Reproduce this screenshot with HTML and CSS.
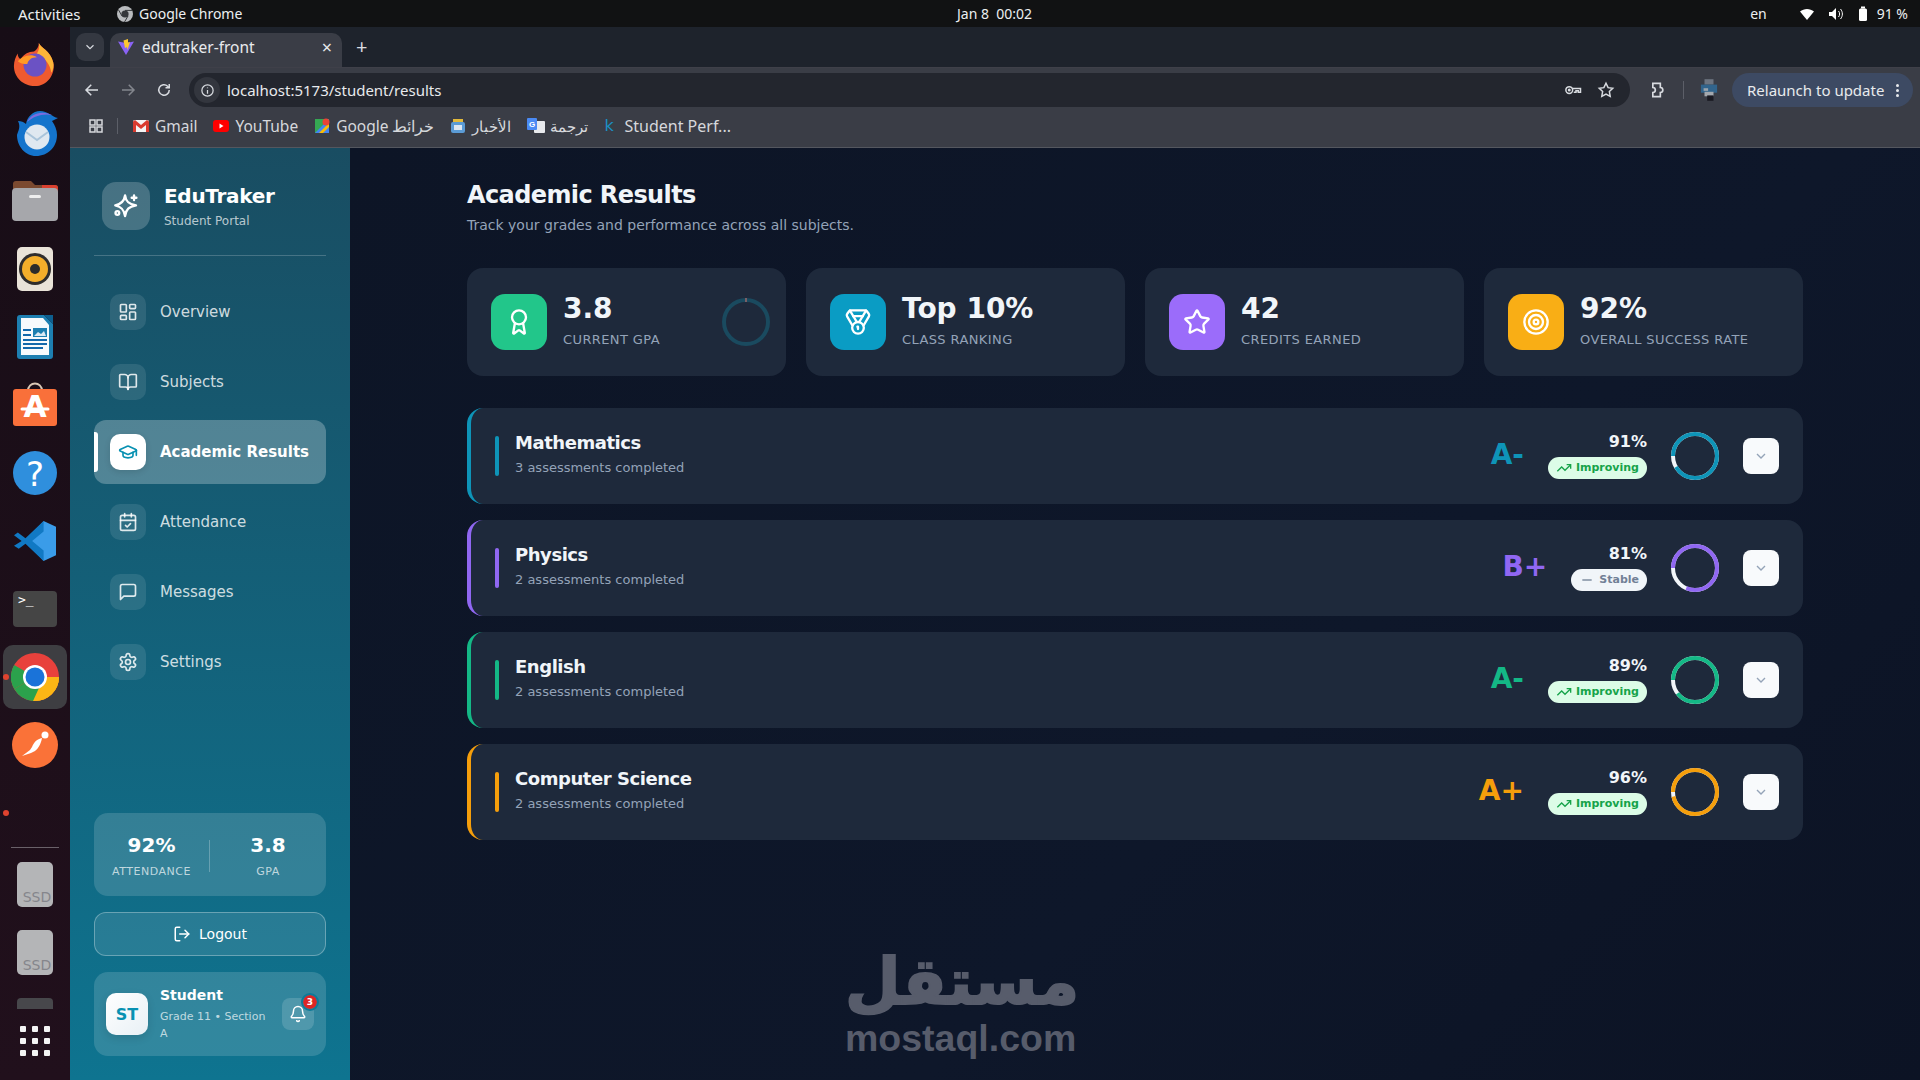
FILE: index.html
```html
<!DOCTYPE html>
<html lang="en">
<head>
    <meta charset="UTF-8">
    <title>edutraker-front</title>
    <link rel="stylesheet" href="styles.css">
</head>
<body>
    <!-- Icon sprite -->
    <svg class="sprite" xmlns="http://www.w3.org/2000/svg">
        <symbol id="i-trend" viewBox="0 0 24 24"><path d="m22 7-8.5 8.5-5-5L2 17"/><path d="M16 7h6v6"/></symbol>
        <symbol id="i-minus" viewBox="0 0 24 24"><path d="M5 12h14"/></symbol>
        <symbol id="i-chevron" viewBox="0 0 24 24"><path d="m6 9 6 6 6-6"/></symbol>
    </svg>

    <!-- Top bar -->
    <div class="topbar">
        <div class="top-left">
            <span class="activities">Activities</span>
            <svg class="top-chrome" viewBox="0 0 16 16"><circle cx="8" cy="8" r="8" fill="#b9bbbe"/><circle cx="8" cy="8" r="3.6" fill="#35373b"/><path d="M8 4.4h7M5 10 1.6 4M11 10l-3.500 6" stroke="#35373b" stroke-width="1"/></svg>
            <span>Google Chrome</span>
        </div>
        <span class="clock">Jan 8&nbsp;&nbsp;00:02</span>
        <div class="top-right">
            <span class="lang">en</span>
            <svg class="tray tray-wifi" viewBox="0 0 16 16"><path d="M1 5.500C5 2 11 2 15 5.500L8 14z" fill="#fff"/></svg>
            <svg class="tray tray-sound" viewBox="0 0 16 16"><path d="M1 6h3l4-4v12l-4-4H1z" fill="#fff"/><path d="M10.500 5c1.500 1.800 1.500 4.200 0 6M12.500 3c2.500 3 2.500 7 0 10" fill="none" stroke="#fff"/></svg>
            <svg class="tray tray-battery" viewBox="0 0 16 16"><rect x="6" y="0.500" width="4" height="2" fill="#fff"/><rect x="4" y="2.500" width="8" height="12.500" rx="1.500" fill="#fff"/></svg>
            <span>91 %</span>
        </div>
    </div>

    <div class="desktop">
        <!-- Dock -->
        <div class="dock">
            <div class="dock-item">
                <svg viewBox="0 0 48 48" width="46" height="46"><path d="M28 1c2 5 12 8 15 20 3 13-7 25-19 25C12 46 2 37 2 25c0-5 2-10 4-13 0 3 1 5 3 6 3-5 8-8 14-8 3-2 5-5 5-9z" fill="#ef5a2f"/><path d="M28 1c2 5 12 8 15 20 1 4 0 8-2 11-1-8-6-15-15-20 2-3 3-7 2-11z" fill="#fdb638"/><circle cx="24" cy="24" r="12" fill="#6b52c4"/><path d="M6 20c6-6 14-8 20-4-6 0-9 3-10 7-4 0-8-1-10-3z" fill="#ff9a26"/></svg>
            </div>
            <div class="dock-item">
                <svg viewBox="0 0 48 48" width="48" height="48"><path d="M7 12c3 6 0 10-1 14 0 11 8 21 19 21 12 0 21-9 21-21 0-5-2-10-5-14l6-3c-6-1-10-7-18-7C22 2 16 8 15 15 13 13 10 12 7 12z" fill="#1474cc"/><path d="M16 13C20 5 30 1 41 6c-9-2-18 1-25 7z" fill="#7b6be0"/><circle cx="26" cy="28" r="12.500" fill="#dfe8f0"/><path d="m15 23 11 8 11-8" fill="none" stroke="#a9c4da" stroke-width="2"/></svg>
            </div>
            <div class="dock-item">
                <svg viewBox="0 0 46 42" width="46" height="42"><path d="M1 4a3 3 0 0 1 3-3h15l4 4h20a3 3 0 0 1 3 3v8H1z" fill="#7b4a30"/><path d="M30 5h13a3 3 0 0 1 3 3v6H30z" fill="#d9402f"/><rect y="8" width="46" height="33" rx="4" fill="#a6a7ab"/><rect x="17" y="15" width="12" height="3" rx="1.500" fill="#eee"/></svg>
            </div>
            <div class="dock-item">
                <svg viewBox="0 0 36 44" width="36" height="44"><rect width="36" height="44" rx="5" fill="#e9e3d8"/><circle cx="18" cy="22" r="16" fill="#2f2d2c"/><circle cx="18" cy="22" r="13" fill="#f4ae2a"/><circle cx="18" cy="22" r="5" fill="#2b2b2b"/></svg>
            </div>
            <div class="dock-item">
                <svg viewBox="0 0 36 44" width="36" height="44"><path d="M3 0h24l9 9v32a3 3 0 0 1-3 3H3a3 3 0 0 1-3-3V3a3 3 0 0 1 3-3z" fill="#1d7fb1"/><path d="M4 3h22l6 7v30H4z" fill="#f7fafc"/><path d="M27 0h9v9z" fill="#0d5f8f"/><path d="M6 15h8M6 20h8M6 25h24M6 29h24M6 33h20" stroke="#1268ab" stroke-width="2"/><rect x="16" y="13" width="14" height="9" fill="#1d7fb1"/><path d="m17 21 4-4 3 2 3-3 2 5z" fill="#dbe9f3"/></svg>
            </div>
            <div class="dock-item dock-shop">
                <svg viewBox="0 0 44 44" width="44" height="44"><path d="M15 9c0-10 14-10 14 0" fill="none" stroke="#d9c7b6" stroke-width="2"/><path d="M3 7h38a3 3 0 0 1 3 3v31a3 3 0 0 1-3 3H3a3 3 0 0 1-3-3V10a3 3 0 0 1 3-3z" fill="#f9703a"/><text class="dock-letter" x="22" y="35" text-anchor="middle" font-size="30">A</text><path d="M9 27h26" stroke="#fff" stroke-width="3" stroke-linecap="round"/></svg>
            </div>
            <div class="dock-item">
                <svg viewBox="0 0 44 44" width="44" height="44"><circle cx="22" cy="22" r="22" fill="#2f8fdd"/><text class="dock-help" x="22" y="35" text-anchor="middle" font-size="34">?</text></svg>
            </div>
            <div class="dock-item">
                <svg viewBox="0 0 44 42" width="42" height="42"><path d="M31 0 44 6v30l-13 6L12 21z" fill="#3a9ce9"/><path d="M31 0v11L19 21l12 10v11L12 24 5 29 0 26l8-5-8-6 4-3 8 6z" fill="#1179c4"/></svg>
            </div>
            <div class="dock-item">
                <svg viewBox="0 0 44 36" width="44" height="36"><rect width="44" height="36" rx="4" fill="#454545"/><text class="dock-term" x="5" y="13" font-size="13">&gt;_</text></svg>
            </div>
            <div class="dock-item dock-active">
                <i class="run-dot"></i>
                <svg viewBox="0 0 48 48" width="48" height="48"><circle cx="24" cy="24" r="24" fill="#e8413c"/><path d="M24 24 3.200 36A24 24 0 0 1 3.200 12z" fill="#2ba24c"/><path d="M24 24h24a24 24 0 0 1-24 24 24 24 0 0 1-2-.1z" fill="#fbb615"/><path d="M24 24 3.200 36a24 24 0 0 0 18.800 11.900L33 24z" fill="#2ba24c"/><path d="M36 24h12a24 24 0 0 1-24 24z" fill="#fbb615"/><circle cx="24" cy="24" r="12" fill="#fff"/><circle cx="24" cy="24" r="9.500" fill="#1a73d9"/></svg>
            </div>
            <div class="dock-item">
                <svg viewBox="0 0 46 46" width="46" height="46"><circle cx="23" cy="23" r="23" fill="#fa7238"/><circle cx="33" cy="13" r="3.500" fill="#fff"/><path d="M30 16c-5 1-8 4-10 9l-2 3-8 6 9-3 4-2c3-2 6-7 7-13z" fill="#fff"/></svg>
            </div>
            <div class="dock-spacer"><i class="run-dot"></i></div>
            <div class="dock-sep"></div>
            <div class="dock-item">
                <svg viewBox="0 0 36 45" width="36" height="45"><rect width="36" height="45" rx="5" fill="#b4b5b7"/><text class="dock-ssd" x="20" y="40" text-anchor="middle" font-size="14">SSD</text></svg>
            </div>
            <div class="dock-item">
                <svg viewBox="0 0 36 45" width="36" height="45"><rect width="36" height="45" rx="5" fill="#b4b5b7"/><text class="dock-ssd" x="20" y="40" text-anchor="middle" font-size="14">SSD</text></svg>
            </div>
            <div class="dock-stub"></div>
            <div class="dock-apps">
                <i></i><i></i><i></i><i></i><i></i><i></i><i></i><i></i><i></i>
            </div>
        </div>

        <div class="window">
            <!-- Tabs -->
            <div class="tabstrip">
                <div class="tab-list"><svg viewBox="0 0 24 24" class="ui-icon small"><path d="m6 9 6 6 6-6"/></svg></div>
                <div class="tab">
                    <svg class="favicon" viewBox="0 0 16 16"><path d="M0 2.500 8 4l8-1.500L8 16z" fill="#8a63f5"/><path d="M10 0 5.500 1.500 7 9l2-1 .5 3L12 3l-2 .5z" fill="#fdc82f"/></svg>
                    <span class="tab-title">edutraker-front</span>
                    <span class="tab-close">&times;</span>
                </div>
                <span class="tab-new">+</span>
            </div>

            <!-- Toolbar -->
            <div class="toolbar">
                <svg class="ui-icon nav-btn" viewBox="0 0 24 24"><path d="M20 12H5M11 5l-7 7 7 7"/></svg>
                <svg class="ui-icon nav-btn dim" viewBox="0 0 24 24"><path d="M4 12h15M13 5l7 7-7 7"/></svg>
                <svg class="ui-icon nav-btn" viewBox="0 0 24 24"><path d="M19 12a7 7 0 1 1-2.200-5.100L19 9"/><path d="M19 4v5h-5"/></svg>
                <div class="omnibox">
                    <span class="site-info"><svg class="ui-icon tiny" viewBox="0 0 24 24"><circle cx="12" cy="12" r="9"/><path d="M12 11v6M12 7v1.500"/></svg></span>
                    <span class="url">localhost:5173/student/results</span>
                    <svg class="ui-icon omni-key" viewBox="0 0 24 24"><circle cx="7" cy="12" r="4.500"/><circle cx="7" cy="12" r="1"/><path d="M11.500 10H22v5h-3v-2h-3v2h-3"/></svg>
                    <svg class="ui-icon omni-star" viewBox="0 0 24 24"><path d="m12 3 2.800 5.900 6.200.8-4.500 4.400 1.100 6.400L12 17.400l-5.600 3.100 1.100-6.400L3 9.700l6.200-.8z"/></svg>
                </div>
                <svg class="ui-icon ext-btn" viewBox="0 0 24 24"><path d="M7 4h9v5a3 3 0 0 1 0 6v5H7v-5a3 3 0 0 0 0-6z"/></svg>
                <span class="tool-sep"></span>
                <svg class="profile" viewBox="0 0 20 24"><rect x="5" width="10" height="6" fill="#6d7480"/><rect x="1" y="6" width="18" height="9" fill="#31648c"/><rect x="4" y="10" width="5" height="3" fill="#9aa3ac"/><rect x="5" y="14" width="10" height="5" fill="#a3a8ae"/><rect x="8" y="18" width="7" height="6" fill="#1a1a22"/></svg>
                <div class="relaunch">Relaunch to update<span class="kebab"><i></i><i></i><i></i></span></div>
            </div>

            <!-- Bookmarks -->
            <div class="bookmarks">
                <svg class="bm-apps" viewBox="0 0 16 16"><path d="M2 2h5v5H2zM9 2h5v5H9zM2 9h5v5H2zM9 9h5v5H9z"/></svg>
                <span class="bm-sep"></span>
                <span class="bm"><svg class="bm-icon" viewBox="0 0 16 16"><rect y="2" width="16" height="12" rx="1.500" fill="#f4f4f4"/><path d="M0 3.500v10.500h3V7l5 4 5-4v7h3V3.500L14 2 8 7 2 2z" fill="#d93b2f"/></svg>Gmail</span>
                <span class="bm"><svg class="bm-icon" viewBox="0 0 16 16"><rect y="2" width="16" height="12" rx="3" fill="#f00"/><path d="m6.500 5.500 4 2.500-4 2.500z" fill="#fff"/></svg>YouTube</span>
                <span class="bm bm-maps"><svg class="bm-icon" viewBox="0 0 16 16"><rect x="1" y="1" width="14" height="14" fill="#35a853"/><path d="M1 15 15 1v14z" fill="#4285f4"/><path d="M5 15 15 5v4l-6 6z" fill="#fbbc05"/><circle cx="12" cy="4" r="3.500" fill="#ea4335"/></svg>Google خرائط</span>
                <span class="bm bm-news"><svg class="bm-icon" viewBox="0 0 16 16"><rect x="3" y="1" width="10" height="5" fill="#e2b93b"/><rect x="1" y="4" width="14" height="11" rx="2" fill="#5b9bd5"/><rect x="4" y="7" width="8" height="5" fill="#dce7f2"/></svg>الأخبار</span>
                <span class="bm bm-trans"><svg class="bm-icon" viewBox="0 0 18 16"><rect x="7" y="3" width="11" height="12" rx="1" fill="#e8eaed"/><rect width="10" height="12" rx="1" fill="#4a8af4"/><text class="bm-g" x="5" y="9" text-anchor="middle" font-size="8">G</text></svg>ترجمة</span>
                <span class="bm bm-student"><span class="bm-k">k</span>Student Perf...</span>
            </div>

            <!-- App -->
            <div class="app">
                <aside class="sidebar">
                    <div class="brand">
                        <div class="brand-icon">
                            <svg class="line-icon" viewBox="0 0 24 24" width="28" height="28"><path d="M11.200 3c.6 4.600 2.600 7.400 9.400 8.400-6.200 1.100-8.600 3.500-9.400 9.200-.9-5.700-3.200-8.100-8.400-9.200 5.400-1 7.700-3.800 8.400-8.400z"/><path d="M18.900 2.900v4"/><path d="M16.900 4.900h4"/><circle cx="4.600" cy="18" r="1.600"/></svg>
                        </div>
                        <div>
                            <div class="brand-name">EduTraker</div>
                            <div class="brand-sub">Student Portal</div>
                        </div>
                    </div>

                    <nav class="side-nav">
                        <a href="#" class="nav-item">
                            <span class="nav-icon"><svg class="line-icon" viewBox="0 0 24 24"><rect x="3" y="3" width="7" height="9" rx="1"/><rect x="14" y="3" width="7" height="5" rx="1"/><rect x="14" y="12" width="7" height="9" rx="1"/><rect x="3" y="16" width="7" height="5" rx="1"/></svg></span>
                            Overview
                        </a>
                        <a href="#" class="nav-item">
                            <span class="nav-icon"><svg class="line-icon" viewBox="0 0 24 24"><path d="M12 7v14"/><path d="M3 18a1 1 0 0 1-1-1V4a1 1 0 0 1 1-1h5a4 4 0 0 1 4 4 4 4 0 0 1 4-4h5a1 1 0 0 1 1 1v13a1 1 0 0 1-1 1h-6a3 3 0 0 0-3 3 3 3 0 0 0-3-3z"/></svg></span>
                            Subjects
                        </a>
                        <a href="#" class="nav-item active">
                            <span class="nav-icon"><svg class="line-icon" viewBox="0 0 24 24"><path d="M21.420 10.922a1 1 0 0 0-.019-1.838L12.830 5.180a2 2 0 0 0-1.660 0L2.600 9.080a1 1 0 0 0 0 1.832l8.570 3.908a2 2 0 0 0 1.660 0z"/><path d="M22 10v6"/><path d="M6 12.500V16a6 3 0 0 0 12 0v-3.500"/></svg></span>
                            Academic Results
                        </a>
                        <a href="#" class="nav-item">
                            <span class="nav-icon"><svg class="line-icon" viewBox="0 0 24 24"><path d="M8 2v4"/><path d="M16 2v4"/><rect x="3" y="4" width="18" height="18" rx="2"/><path d="M3 10h18"/><path d="m9 16 2 2 4-4"/></svg></span>
                            Attendance
                        </a>
                        <a href="#" class="nav-item">
                            <span class="nav-icon"><svg class="line-icon" viewBox="0 0 24 24"><path d="M21 15a2 2 0 0 1-2 2H7l-4 4V5a2 2 0 0 1 2-2h14a2 2 0 0 1 2 2z"/></svg></span>
                            Messages
                        </a>
                        <a href="#" class="nav-item">
                            <span class="nav-icon"><svg class="line-icon" viewBox="0 0 24 24"><path d="M12.220 2h-.44a2 2 0 0 0-2 2v.18a2 2 0 0 1-1 1.730l-.43.25a2 2 0 0 1-2 0l-.15-.08a2 2 0 0 0-2.730.73l-.22.38a2 2 0 0 0 .73 2.730l.15.1a2 2 0 0 1 1 1.720v.51a2 2 0 0 1-1 1.740l-.15.09a2 2 0 0 0-.73 2.730l.22.38a2 2 0 0 0 2.730.73l.15-.08a2 2 0 0 1 2 0l.43.25a2 2 0 0 1 1 1.730V20a2 2 0 0 0 2 2h.44a2 2 0 0 0 2-2v-.18a2 2 0 0 1 1-1.730l.43-.25a2 2 0 0 1 2 0l.15.08a2 2 0 0 0 2.730-.73l.22-.39a2 2 0 0 0-.73-2.730l-.15-.08a2 2 0 0 1-1-1.740v-.5a2 2 0 0 1 1-1.740l.15-.09a2 2 0 0 0 .73-2.730l-.22-.38a2 2 0 0 0-2.730-.73l-.15.08a2 2 0 0 1-2 0l-.43-.25a2 2 0 0 1-1-1.730V4a2 2 0 0 0-2-2z"/><circle cx="12" cy="12" r="3"/></svg></span>
                            Settings
                        </a>
                    </nav>

                    <div class="side-stats">
                        <div class="side-stat">
                            <div class="side-value">92%</div>
                            <div class="side-label">ATTENDANCE</div>
                        </div>
                        <div class="side-stat">
                            <div class="side-value">3.8</div>
                            <div class="side-label">GPA</div>
                        </div>
                    </div>

                    <button class="logout">
                        <svg class="line-icon" viewBox="0 0 24 24" width="18" height="18"><path d="M9 21H5a2 2 0 0 1-2-2V5a2 2 0 0 1 2-2h4"/><path d="m16 17 5-5-5-5"/><path d="M21 12H9"/></svg>
                        Logout
                    </button>

                    <div class="user-card">
                        <div class="avatar">ST</div>
                        <div class="user-info">
                            <div class="user-name">Student</div>
                            <div class="user-sub">Grade 11 • Section A</div>
                        </div>
                        <div class="bell">
                            <svg class="line-icon" viewBox="0 0 24 24" width="18" height="18"><path d="M10.268 21a2 2 0 0 0 3.464 0"/><path d="M3.262 15.326A1 1 0 0 0 4 17h16a1 1 0 0 0 .74-1.673C19.410 13.956 18 12.499 18 8A6 6 0 0 0 6 8c0 4.499-1.411 5.956-2.738 7.326"/></svg>
                            <span class="bell-count">3</span>
                        </div>
                    </div>
                </aside>

                <main class="content">
                    <h1>Academic Results</h1>
                    <p class="page-sub">Track your grades and performance across all subjects.</p>

                    <div class="stat-grid">
                        <div class="stat-card">
                            <div class="stat-icon green"><svg class="line-icon" viewBox="0 0 24 24"><path d="m15.477 12.890 1.515 8.526a.5.5 0 0 1-.81.47l-3.580-2.687a1 1 0 0 0-1.197 0l-3.586 2.686a.5.5 0 0 1-.81-.469l1.514-8.526"/><circle cx="12" cy="8" r="6"/></svg></div>
                            <div class="stat-text">
                                <div class="stat-value">3.8</div>
                                <div class="stat-label">CURRENT GPA</div>
                            </div>
                            <svg class="gpa-ring" viewBox="0 0 48 48"><circle cx="24" cy="24" r="22"/><path class="gpa-tick" d="M24 0v4"/></svg>
                        </div>
                        <div class="stat-card">
                            <div class="stat-icon cyan"><svg class="line-icon" viewBox="0 0 24 24"><path d="M7.210 15 2.660 7.140a2 2 0 0 1 .13-2.200L4.400 2.800A2 2 0 0 1 6 2h12a2 2 0 0 1 1.600.8l1.600 2.140a2 2 0 0 1 .14 2.200L16.790 15"/><path d="M11 12 5.120 2.200"/><path d="m13 12 5.880-9.800"/><path d="M8 7h8"/><circle cx="12" cy="17" r="5"/><path d="M12 18v-2h-.5"/></svg></div>
                            <div class="stat-text">
                                <div class="stat-value">Top 10%</div>
                                <div class="stat-label">CLASS RANKING</div>
                            </div>
                        </div>
                        <div class="stat-card">
                            <div class="stat-icon purple"><svg class="line-icon" viewBox="0 0 24 24"><path d="M11.525 2.295a.53.53 0 0 1 .95 0l2.310 4.679a2.123 2.123 0 0 0 1.595 1.160l5.166.756a.53.53 0 0 1 .294.904l-3.736 3.638a2.123 2.123 0 0 0-.611 1.878l.882 5.140a.53.53 0 0 1-.771.56l-4.618-2.428a2.122 2.122 0 0 0-1.973 0L6.396 21.010a.53.53 0 0 1-.77-.56l.881-5.139a2.122 2.122 0 0 0-.611-1.879L2.160 9.795a.53.53 0 0 1 .294-.906l5.165-.755a2.122 2.122 0 0 0 1.597-1.160z"/></svg></div>
                            <div class="stat-text">
                                <div class="stat-value">42</div>
                                <div class="stat-label">CREDITS EARNED</div>
                            </div>
                        </div>
                        <div class="stat-card">
                            <div class="stat-icon amber"><svg class="line-icon" viewBox="0 0 24 24"><circle cx="12" cy="12" r="10"/><circle cx="12" cy="12" r="6"/><circle cx="12" cy="12" r="2"/></svg></div>
                            <div class="stat-text">
                                <div class="stat-value">92%</div>
                                <div class="stat-label">OVERALL SUCCESS RATE</div>
                            </div>
                        </div>
                    </div>

                    <div class="subject-list">
                        <div class="subject-card math">
                            <span class="subject-bar"></span>
                            <div class="subject-info">
                                <div class="subject-name">Mathematics</div>
                                <div class="subject-sub">3 assessments completed</div>
                            </div>
                            <div class="grade">A-</div>
                            <div class="score">
                                <div class="score-pct">91%</div>
                                <div class="badge up"><svg class="badge-icon"><use href="#i-trend"/></svg>Improving</div>
                            </div>
                            <svg class="ring" viewBox="0 0 48 48"><circle class="ring-track" cx="24" cy="24" r="22"/><circle class="ring-bar" cx="24" cy="24" r="22" stroke-dasharray="125.800 138.230" transform="rotate(180 24 24)"/></svg>
                            <div class="toggle"><svg class="toggle-icon"><use href="#i-chevron"/></svg></div>
                        </div>
                        <div class="subject-card physics">
                            <span class="subject-bar"></span>
                            <div class="subject-info">
                                <div class="subject-name">Physics</div>
                                <div class="subject-sub">2 assessments completed</div>
                            </div>
                            <div class="grade">B+</div>
                            <div class="score">
                                <div class="score-pct">81%</div>
                                <div class="badge flat"><svg class="badge-icon"><use href="#i-minus"/></svg>Stable</div>
                            </div>
                            <svg class="ring" viewBox="0 0 48 48"><circle class="ring-track" cx="24" cy="24" r="22"/><circle class="ring-bar" cx="24" cy="24" r="22" stroke-dasharray="111.970 138.230" transform="rotate(180 24 24)"/></svg>
                            <div class="toggle"><svg class="toggle-icon"><use href="#i-chevron"/></svg></div>
                        </div>
                        <div class="subject-card english">
                            <span class="subject-bar"></span>
                            <div class="subject-info">
                                <div class="subject-name">English</div>
                                <div class="subject-sub">2 assessments completed</div>
                            </div>
                            <div class="grade">A-</div>
                            <div class="score">
                                <div class="score-pct">89%</div>
                                <div class="badge up"><svg class="badge-icon"><use href="#i-trend"/></svg>Improving</div>
                            </div>
                            <svg class="ring" viewBox="0 0 48 48"><circle class="ring-track" cx="24" cy="24" r="22"/><circle class="ring-bar" cx="24" cy="24" r="22" stroke-dasharray="123.020 138.230" transform="rotate(180 24 24)"/></svg>
                            <div class="toggle"><svg class="toggle-icon"><use href="#i-chevron"/></svg></div>
                        </div>
                        <div class="subject-card cs">
                            <span class="subject-bar"></span>
                            <div class="subject-info">
                                <div class="subject-name">Computer Science</div>
                                <div class="subject-sub">2 assessments completed</div>
                            </div>
                            <div class="grade">A+</div>
                            <div class="score">
                                <div class="score-pct">96%</div>
                                <div class="badge up"><svg class="badge-icon"><use href="#i-trend"/></svg>Improving</div>
                            </div>
                            <svg class="ring" viewBox="0 0 48 48"><circle class="ring-track" cx="24" cy="24" r="22"/><circle class="ring-bar" cx="24" cy="24" r="22" stroke-dasharray="132.700 138.230" transform="rotate(180 24 24)"/></svg>
                            <div class="toggle"><svg class="toggle-icon"><use href="#i-chevron"/></svg></div>
                        </div>
                    </div>

                    <!-- Watermark over the page -->
                    <div class="watermark">
                        <div class="wm-ar">مستقل</div>
                        <div class="wm-en">mostaql.com</div>
                    </div>
                </main>
            </div>
        </div>
    </div>
</body>
</html>
```

FILE: styles.css
```css
* {
    box-sizing: border-box;
}
body {
    margin: 0;
    width: 1920px;
    height: 1080px;
    overflow: hidden;
    display: flex;
    flex-direction: column;
    background: #111;
    font-family: "DejaVu Sans", sans-serif;
    color: #fff;
}
.sprite {
    display: none;
}

/* Top bar */
.topbar {
    height: 27px;
    flex: none;
    display: flex;
    align-items: center;
    background: #111213;
    font-family: "Noto Sans", sans-serif;
    font-size: 14px;
    color: #eceff1;
}
.top-left {
    width: 957px;
    display: flex;
    align-items: center;
    padding-left: 18px;
}
.activities {
    width: 99px;
    font-size: 15px;
}
.top-chrome {
    width: 16px;
    height: 16px;
    margin-right: 6px;
}
.clock {
    font-size: 14px;
}
.top-right {
    margin-left: auto;
    display: flex;
    align-items: center;
    padding-right: 12px;
}
.lang {
    margin-right: 32px;
}
.tray {
    width: 16px;
    height: 16px;
}
.tray-wifi {
    margin-right: 13px;
}
.tray-sound {
    margin-right: 11px;
}
.tray-battery {
    margin-right: 6px;
}

.desktop {
    flex: 1;
    display: flex;
    min-height: 0;
}

/* Dock */
.dock {
    width: 70px;
    flex: none;
    display: flex;
    flex-direction: column;
    align-items: center;
    padding-top: 4px;
    background: linear-gradient(180deg, #170d16, #21101c);
}
.dock-item {
    position: relative;
    width: 64px;
    height: 68px;
    flex: none;
    display: flex;
    align-items: center;
    justify-content: center;
}
.dock-shop svg {
    margin-top: -3px;
}
.dock-active {
    height: 64px;
    margin: 2px 0;
    background: #3e3e42;
    border-radius: 10px;
}
.run-dot {
    position: absolute;
    left: 3px;
    top: 29px;
    width: 6px;
    height: 6px;
    border-radius: 50%;
    background: #e0432f;
}
.dock-spacer {
    position: relative;
    width: 64px;
    height: 68px;
    flex: none;
}
.dock-spacer .run-dot {
    left: 0;
    top: 31px;
}
.dock-active .run-dot {
    left: 0;
}
.dock-sep {
    width: 48px;
    height: 1px;
    flex: none;
    background: #6a6169;
    margin-bottom: 2px;
}
.dock-letter {
    font-family: "DejaVu Sans", sans-serif;
    font-weight: bold;
    fill: #fff;
}
.dock-help {
    font-family: "DejaVu Sans", sans-serif;
    fill: #fff;
}
.dock-term {
    font-family: "DejaVu Sans Mono", monospace;
    fill: #fff;
}
.dock-ssd {
    font-family: "DejaVu Sans", sans-serif;
    fill: #85868c;
}
.dock-stub {
    width: 36px;
    height: 11px;
    flex: none;
    margin-top: 12px;
    background: #47474b;
    border-radius: 4px 4px 0 0;
}
.dock-apps {
    display: grid;
    grid-template-columns: repeat(3, 6px);
    gap: 6px;
    margin-top: 17px;
}
.dock-apps i {
    width: 6px;
    height: 6px;
    border-radius: 1px;
    background: #f4f4f4;
}

/* Chrome window */
.window {
    flex: 1;
    min-width: 0;
    display: flex;
    flex-direction: column;
}
.tabstrip {
    height: 40px;
    flex: none;
    display: flex;
    align-items: flex-end;
    padding-left: 6px;
    background: #1e232c;
    font-family: "Noto Sans", sans-serif;
}
.tab-list {
    width: 28px;
    height: 28px;
    margin: 0 6px 6px 0;
    display: flex;
    align-items: center;
    justify-content: center;
    background: #343841;
    border-radius: 9px;
}
.ui-icon {
    width: 18px;
    height: 18px;
    fill: none;
    stroke: #d8dbe0;
    stroke-width: 2;
}
.ui-icon.small {
    width: 14px;
    height: 14px;
}
.ui-icon.tiny {
    width: 15px;
    height: 15px;
}
.tab {
    width: 232px;
    height: 34px;
    display: flex;
    align-items: center;
    padding: 0 9px 6px 8px;
    background: #3a3d46;
    border-radius: 10px 10px 0 0;
    font-size: 14px;
    color: #e8eaed;
}
.favicon {
    width: 16px;
    height: 16px;
    margin-right: 8px;
}
.tab-title {
    flex: 1;
    font-size: 15.500px;
}
.tab-close {
    font-size: 18px;
    line-height: 1;
    margin-right: 1px;
}
.tab-new {
    margin: 0 0 6px 14px;
    font-size: 20px;
    line-height: 28px;
    color: #dadce0;
}
.toolbar {
    height: 40px;
    flex: none;
    display: flex;
    align-items: flex-end;
    padding: 0 7px 0 13px;
    background: #3a3d46;
    border-top: 1px solid #3f4049;
    font-family: "Noto Sans", sans-serif;
}
.nav-btn {
    margin: 0 18px 8px 0;
}
.nav-btn.dim {
    stroke: #83868d;
}
.omnibox {
    flex: 1;
    height: 34px;
    margin-left: -2px;
    display: flex;
    align-items: center;
    padding: 0 15px 0 5px;
    background: #23262e;
    border-radius: 17px;
}
.site-info {
    width: 26px;
    height: 26px;
    display: flex;
    align-items: center;
    justify-content: center;
    border-radius: 50%;
    background: #33363e;
}
.url {
    flex: 1;
    margin-left: 7px;
    font-size: 15px;
    color: #e8eaed;
}
.omni-key {
    margin-right: 15px;
}
.ext-btn {
    width: 20px;
    height: 20px;
    margin: 0 0 7px 17px;
}
.tool-sep {
    width: 1px;
    height: 18px;
    margin: 0 16px 8px 16px;
    background: #5c5f68;
}
.profile {
    width: 18px;
    height: 24px;
    margin: 0 14px 5px 0;
}
.relaunch {
    width: 181px;
    height: 34px;
    display: flex;
    align-items: center;
    justify-content: space-between;
    padding: 0 14px 0 15px;
    background: #3d4a63;
    border-radius: 17px;
    font-size: 15px;
    color: #e8eaed;
}
.kebab {
    display: flex;
    flex-direction: column;
    gap: 2px;
}
.kebab i {
    width: 3px;
    height: 3px;
    border-radius: 50%;
    background: #e8eaed;
}
.bookmarks {
    height: 41px;
    flex: none;
    display: flex;
    align-items: center;
    padding: 0 0 3px 18px;
    background: #3a3d46;
    border-bottom: 1px solid #54575f;
    font-family: "Noto Sans", sans-serif;
    font-size: 15.500px;
    color: #d6d8dc;
}
.bm-apps {
    width: 16px;
    height: 16px;
    fill: none;
    stroke: #d6d8dc;
    stroke-width: 1.500;
}
.bm-sep {
    width: 1px;
    height: 16px;
    margin: 0 15px 0 13px;
    background: #5c5f68;
}
.bm {
    display: flex;
    align-items: center;
    margin-right: 16px;
}
.bm-news {
    font-size: 14.500px;
}
.bm-trans {
    font-size: 14.500px;
}
.bm-student {
    font-size: 16px;
}
.bm-icon {
    width: 16px;
    height: 16px;
    margin-right: 6px;
    flex: none;
}
.bm-trans .bm-icon {
    width: 18px;
    margin-right: 5px;
}
.bm-g {
    font-family: "Liberation Sans", sans-serif;
    font-weight: bold;
    fill: #fff;
}
.bm-k {
    width: 20px;
    font-family: "DejaVu Sans", sans-serif;
    font-size: 16px;
    color: #1b8fc4;
}

/* App */
.app {
    flex: 1;
    min-height: 0;
    display: flex;
}
.sidebar {
    width: 280px;
    flex: none;
    display: flex;
    flex-direction: column;
    padding: 34px 24px 24px;
    background: linear-gradient(180deg, #194d62 0%, #0e7490 100%);
}
.brand {
    display: flex;
    align-items: center;
    gap: 14px;
    padding: 0 8px 25px;
    border-bottom: 1px solid rgba(255, 255, 255, 0.2);
    margin-bottom: 24px;
}
.brand-icon {
    width: 48px;
    height: 48px;
    display: flex;
    align-items: center;
    justify-content: center;
    background: rgba(255, 255, 255, 0.2);
    border-radius: 14px;
}
.line-icon {
    fill: none;
    stroke: #fff;
    stroke-width: 2;
    stroke-linecap: round;
    stroke-linejoin: round;
}
.brand-name {
    font-size: 20px;
    font-weight: bold;
    line-height: 24px;
    letter-spacing: -0.3px;
}
.brand-sub {
    margin-top: 6px;
    font-size: 12px;
    line-height: 15px;
    color: rgba(255, 255, 255, 0.7);
}
.side-nav {
    flex: 1;
    display: flex;
    flex-direction: column;
    gap: 6px;
}
.nav-item {
    position: relative;
    height: 64px;
    display: flex;
    align-items: center;
    gap: 14px;
    padding-left: 16px;
    border-radius: 12px;
    font-size: 15px;
    color: rgba(255, 255, 255, 0.8);
    text-decoration: none;
}
.nav-icon {
    width: 36px;
    height: 36px;
    display: flex;
    align-items: center;
    justify-content: center;
    background: rgba(255, 255, 255, 0.1);
    border-radius: 10px;
}
.nav-icon .line-icon {
    width: 20px;
    height: 20px;
    stroke: rgba(255, 255, 255, 0.85);
}
.nav-item.active {
    background: rgba(255, 255, 255, 0.26);
    color: #fff;
    font-weight: bold;
}
.nav-item.active::before {
    content: "";
    position: absolute;
    left: 0;
    top: 12px;
    width: 4px;
    height: 40px;
    background: #fff;
    border-radius: 0 3px 3px 0;
}
.nav-item.active .nav-icon {
    background: #fff;
    box-shadow: 0 2px 6px rgba(0, 0, 0, 0.12);
}
.nav-item.active .line-icon {
    stroke: #0891b2;
}
.side-stats {
    height: 83px;
    flex: none;
    display: flex;
    align-items: center;
    padding-top: 3px;
    background: rgba(255, 255, 255, 0.15);
    border-radius: 14px;
}
.side-stat {
    flex: 1;
    height: 32px;
    display: flex;
    flex-direction: column;
    align-items: center;
    justify-content: center;
}
.side-stat:first-child {
    border-right: 1px solid rgba(255, 255, 255, 0.25);
    flex: none;
    width: 116px;
}
.side-value {
    font-size: 20px;
    font-weight: bold;
    line-height: 24px;
}
.side-label {
    margin-top: 8px;
    font-size: 11px;
    line-height: 14px;
    letter-spacing: 0.5px;
    color: rgba(255, 255, 255, 0.7);
}
.logout {
    height: 44px;
    flex: none;
    margin-top: 16px;
    display: flex;
    align-items: center;
    justify-content: center;
    gap: 8px;
    background: rgba(255, 255, 255, 0.1);
    border: 1px solid rgba(255, 255, 255, 0.3);
    border-radius: 12px;
    font-family: "DejaVu Sans", sans-serif;
    font-size: 14px;
    color: #fff;
}
.user-card {
    height: 84px;
    flex: none;
    margin-top: 16px;
    display: flex;
    align-items: center;
    padding: 0 12px;
    background: rgba(255, 255, 255, 0.15);
    border-radius: 14px;
}
.avatar {
    width: 42px;
    height: 42px;
    flex: none;
    display: flex;
    align-items: center;
    justify-content: center;
    background: linear-gradient(135deg, #fff, #e8f0f5);
    border-radius: 10px;
    box-shadow: 0 3px 8px rgba(0, 0, 0, 0.12);
    font-size: 16px;
    font-weight: bold;
    color: #0891b2;
}
.user-info {
    flex: 1;
    min-width: 0;
    margin: 0 8px 0 12px;
}
.user-name {
    font-size: 14px;
    font-weight: bold;
    line-height: 18px;
    margin-bottom: 4px;
}
.user-sub {
    font-size: 11px;
    line-height: 17px;
    color: rgba(255, 255, 255, 0.7);
}
.bell {
    position: relative;
    width: 32px;
    height: 32px;
    flex: none;
    display: flex;
    align-items: center;
    justify-content: center;
    background: rgba(255, 255, 255, 0.15);
    border-radius: 8px;
}
.bell-count {
    position: absolute;
    top: -3px;
    right: -3px;
    width: 14px;
    height: 14px;
    display: flex;
    align-items: center;
    justify-content: center;
    background: #dc2626;
    border-radius: 50%;
    outline: 2px solid #0e7a98;
    font-size: 9px;
    font-weight: bold;
}

/* Main content */
.content {
    position: relative;
    flex: 1;
    min-width: 0;
    padding: 33px 117px 0;
    background: linear-gradient(135deg, #0d1526, #0e172a 60%, #0c1324);
}
h1 {
    margin: 0;
    font-size: 24px;
    line-height: 29px;
    font-weight: bold;
    letter-spacing: -0.6px;
    color: #f1f5f9;
}
.page-sub {
    margin: 5px 0 0;
    font-size: 14px;
    line-height: 20px;
    color: #94a3b8;
}
.stat-grid {
    margin-top: 33px;
    display: grid;
    grid-template-columns: repeat(4, 1fr);
    gap: 20px;
}
.stat-card {
    height: 108px;
    display: flex;
    align-items: center;
    gap: 16px;
    padding: 0 16px 0 24px;
    background: #1e293b;
    border-radius: 16px;
}
.stat-icon {
    width: 56px;
    height: 56px;
    flex: none;
    display: flex;
    align-items: center;
    justify-content: center;
    border-radius: 14px;
}
.stat-icon .line-icon {
    width: 28px;
    height: 28px;
}
.green {
    background: #22c68a;
}
.cyan {
    background: #0a9cc4;
}
.purple {
    background: #9b6cfa;
}
.amber {
    background: #f9ae15;
}
.stat-text {
    flex: 1;
    margin-bottom: 5px;
}
.stat-value {
    font-size: 28px;
    font-weight: bold;
    line-height: 34px;
    color: #f1f5f9;
}
.stat-label {
    margin-top: 6px;
    font-size: 13px;
    line-height: 16px;
    letter-spacing: 0.4px;
    color: #94a3b8;
}
.gpa-ring {
    width: 48px;
    height: 48px;
    flex: none;
    fill: none;
    stroke: #1a4a5f;
    stroke-width: 4;
}
.gpa-tick {
    stroke: #7a5f66;
    stroke-width: 2;
}
.subject-list {
    margin-top: 32px;
    display: flex;
    flex-direction: column;
    gap: 16px;
}
.subject-card {
    height: 96px;
    display: flex;
    align-items: center;
    gap: 24px;
    padding: 0 24px;
    background: #1e293b;
    border-left: 4px solid var(--accent);
    border-radius: 16px;
}
.math {
    --accent: #0e94b8;
}
.physics {
    --accent: #9067f2;
}
.english {
    --accent: #14b886;
}
.cs {
    --accent: #f59e0b;
}
.subject-bar {
    width: 4px;
    height: 40px;
    background: var(--accent);
    border-radius: 2px;
    margin-right: -8px;
}
.subject-info {
    flex: 1;
    margin-bottom: 4px;
}
.subject-name {
    font-size: 18px;
    font-weight: bold;
    line-height: 24px;
    letter-spacing: -0.45px;
    color: #f1f5f9;
}
.subject-sub {
    margin-top: 4px;
    font-size: 13px;
    line-height: 18px;
    color: #94a3b8;
}
.grade {
    font-size: 28px;
    font-weight: bold;
    line-height: 34px;
    margin-bottom: 2px;
    color: var(--accent);
}
.score {
    display: flex;
    flex-direction: column;
    align-items: flex-end;
    gap: 6px;
    margin-bottom: 2px;
}
.score-pct {
    font-size: 16px;
    font-weight: bold;
    line-height: 19px;
    color: #f1f5f9;
}
.badge {
    height: 22px;
    display: flex;
    align-items: center;
    gap: 4px;
    padding: 0 8px;
    border-radius: 11px;
    font-size: 11px;
    font-weight: bold;
}
.badge.up {
    background: #dcfce7;
    color: #16a34a;
}
.badge.flat {
    background: #f1f5f9;
    color: #718096;
}
.badge-icon {
    width: 16px;
    height: 16px;
    fill: none;
    stroke: currentColor;
    stroke-width: 2;
}
.ring {
    width: 48px;
    height: 48px;
    flex: none;
    fill: none;
    stroke-width: 4;
}
.ring-track {
    stroke: #f1f5f9;
}
.ring-bar {
    stroke: var(--accent);
}
.toggle {
    width: 36px;
    height: 36px;
    flex: none;
    display: flex;
    align-items: center;
    justify-content: center;
    background: #f8fafc;
    border-radius: 8px;
}
.toggle-icon {
    width: 16px;
    height: 16px;
    fill: none;
    stroke: #94a3b8;
    stroke-width: 2;
}
.watermark {
    position: absolute;
    left: 495px;
    top: 792px;
    width: 230px;
    text-align: center;
    color: #575c6b;
    font-weight: bold;
}
.wm-ar {
    padding: 6px 6px 0 0;
    font-size: 64px;
    line-height: 73px;
    -webkit-text-stroke: 2px #575c6b;
}
.wm-en {
    font-family: "Liberation Sans", sans-serif;
    font-size: 37.500px;
    line-height: 38px;
}
```
